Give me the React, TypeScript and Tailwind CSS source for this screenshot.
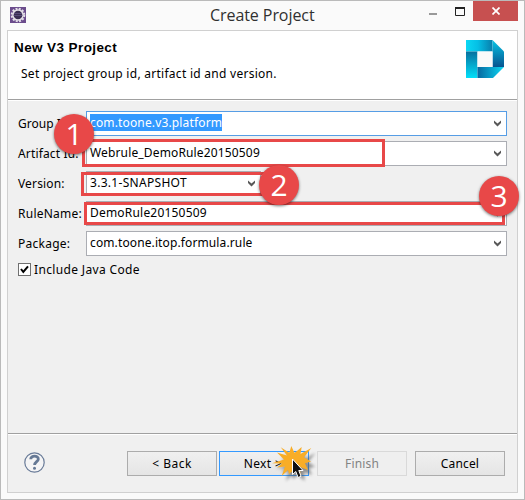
import React from "react";

function Chevron() {
  return (
    <svg className="mr-[5px] shrink-0" width="7" height="7" viewBox="0 0 7 7">
      <path d="M0 .5 L3.5 3.5 L7 .5 V3 L3.5 6.5 L0 3 Z" fill="#585858" />
    </svg>
  );
}

function Combo({ value, width = "w-[421px]", border = "border-[#abadb3]", tracking = "tracking-[.15px]", children }: {
  value: React.ReactNode;
  width?: string;
  border?: string;
  tracking?: string;
  children?: React.ReactNode;
}) {
  return (
    <div className={`relative flex h-[25px] items-center justify-between border bg-white pl-[3px] ${width} ${border}`}>
      <span className={`relative -top-px whitespace-nowrap leading-[17px] ${tracking}`}>{value}</span>
      <Chevron />
      {children}
    </div>
  );
}

function Row({ label, labelClass = "", children }: { label: string; labelClass?: string; children: React.ReactNode }) {
  return (
    <div className="flex h-[25px] items-center">
      <span className={`w-[68px] shrink-0 whitespace-nowrap ${labelClass}`}>{label}</span>
      {children}
    </div>
  );
}

function Badge({ n, place }: { n: number; place: string }) {
  return (
    <div className={`absolute z-20 flex size-10 items-center justify-center rounded-full bg-[#e84848] font-['Open_Sans',sans-serif] text-[30px] leading-none text-white shadow-[0_1px_3px_rgba(0,0,0,0.55)] ${place}`}>
      {n}
    </div>
  );
}

function Button({ children, tone = "border-[#acacac] text-black bg-linear-to-b from-[#f0f0f0] to-[#e5e5e5]", tracking = "tracking-[.15px]" }: {
  children: React.ReactNode;
  tone?: string;
  tracking?: string;
}) {
  return (
    <button className={`relative h-[25px] w-[90px] whitespace-nowrap border text-center leading-[23px] ${tone} ${tracking}`}>
      {children}
    </button>
  );
}

function EclipseIcon() {
  return (
    <svg width="16" height="16" viewBox="0 0 16 16">
      <rect width="16" height="16" fill="#6b4c8c" />
      <circle cx="8" cy="8" r="6.3" fill="none" stroke="#e4dfea" strokeWidth="2" strokeDasharray="2 1.3" />
      <circle cx="8" cy="8" r="5.1" fill="#3a2d52" stroke="#e4e0e6" strokeWidth="1.5" />
      <path d="M4 6.5h8M3.5 8.5h9" stroke="#67598a" strokeWidth=".7" />
    </svg>
  );
}

function Logo() {
  return (
    <svg width="38" height="38" viewBox="0 0 38 38">
      <defs>
        <linearGradient id="top" x2="1"><stop stopColor="#0bd8f4" /><stop offset=".45" stopColor="#05bfe5" /><stop offset="1" stopColor="#087eac" /></linearGradient>
        <linearGradient id="right" x2="0" y2="1"><stop stopColor="#06c5e6" /><stop offset="1" stopColor="#07538f" /></linearGradient>
        <linearGradient id="left" x2="0" y2="1"><stop stopColor="#06709e" /><stop offset="1" stopColor="#02e0fa" /></linearGradient>
        <linearGradient id="bottom" x2="1"><stop stopColor="#0768a0" /><stop offset="1" stopColor="#0bd8f4" /></linearGradient>
      </defs>
      <path d="M0 0H26.5V11.5H0Z" fill="url(#top)" />
      <path d="M0 11.5H11.5V38H0Z" fill="url(#left)" />
      <path d="M11.5 27H38L27 38H11.5Z" fill="url(#bottom)" />
      <path d="M26.5 0L38 11.5V27H26.5Z" fill="url(#right)" />
      <path d="M11.5 11.5H26.5V27H11.5Z" fill="#fafafa" />
    </svg>
  );
}

function ClickBurst() {
  const burst = "M0 18.3L12 14.5L5 7.5L15 10.5L8.7 2.3L17.3 7.7L19.3 1L22.5 8L29.7 2L28.5 9L39.3 3L32 12.3L39 16.5L33 18.3L36 25L28 22L28.5 31L22 25L17 29L16 25L9.7 31L13 21.5L5 22.5L10 18.5Z";
  return (
    <svg className="absolute left-[52px] top-[-7px] z-10" width="48" height="42" viewBox="0 0 48 42">
      <defs>
        <filter id="soft" x="-30%" y="-30%" width="170%" height="170%"><feGaussianBlur stdDeviation="1.7" /></filter>
      </defs>
      <path d={burst} transform="translate(4 5)" fill="#555" opacity=".6" filter="url(#soft)" />
      <path d={burst} fill="#f8ad27" />
      <path d="M20.5 14V29.5L23.8 26.5L26.1 32.5L29 31.2L26.8 25.5H31Z" fill="#111" stroke="#fff" strokeWidth="1" />
    </svg>
  );
}

export default function App() {
  return (
    <div className="flex h-[500px] w-[525px] flex-col border border-[#bababa] bg-[#fafafa] px-[6px] pb-[6px] font-['Noto_Sans','Open_Sans',sans-serif] text-[12px] text-black">
      <header className="relative flex h-[29px] shrink-0 items-start">
        <div className="ml-[3px] mt-[6px]"><EclipseIcon /></div>
        <h1 className="ml-[184px] mt-[4px] w-[105px] whitespace-nowrap font-['Open_Sans',sans-serif] text-[16px] leading-5 tracking-[-.07px] text-[#303030]">Create Project</h1>
        <svg className="ml-[114px] mt-[6px]" width="37" height="9" viewBox="0 0 37 9">
          <path d="M0 7H8" stroke="#999" strokeWidth="2" />
          <path d="M26.5 1.5H35.5V8.5H26.5Z" fill="none" stroke="#222" />
          <path d="M26 1H36" stroke="#222" strokeWidth="2" />
        </svg>
        <div className="absolute right-0 top-0 flex h-5 w-[45px] items-center justify-center bg-[#c75050]">
          <svg width="8" height="8" viewBox="0 0 8 8"><path d="M.5 .5L7.5 7.5M7.5 .5L.5 7.5" stroke="white" strokeWidth="1.7" /></svg>
        </div>
      </header>
      <main className="flex min-h-0 flex-1 flex-col border border-[#d0d0d0] bg-[#f0f0f0]">
        <section className="flex h-[69px] shrink-0 justify-between border-b border-[#a0a0a0] bg-white">
          <div>
            <h2 className="ml-[6px] mt-[9px] whitespace-nowrap font-['Liberation_Sans',Arial,sans-serif] text-[13.5px] font-bold leading-4 tracking-[.4px]">New V3 Project</h2>
            <p className="ml-[13px] mt-[9px] whitespace-nowrap text-[12px] leading-[18px] tracking-[.27px]">Set project group id, artifact id and version.</p>
          </div>
          <div className="mr-[13px] mt-[9px]"><Logo /></div>
        </section>
        <section className="flex h-[333px] shrink-0 flex-col gap-[5px] border-t border-white pl-[10px] pt-[10px]">
          <Row label="Group Id:">
            <Combo border="border-[#569de5]" value={<span className="inline-block bg-[#3399ff] text-white">com.toone.v3.platform</span>}>
              <Badge n={1} place="left-[-33px] top-[2px]" />
            </Combo>
          </Row>
          <Row label="Artifact Id:" labelClass="tracking-[.15px]">
            <Combo value="Webrule_DemoRule20150509">
              <div className="absolute left-[-5px] top-[-3px] h-7 w-[303px] border-3 border-[#e84848]" />
            </Combo>
          </Row>
          <Row label="Version:" labelClass="tracking-[.15px]">
            <Combo width="w-[175px]" value="3.3.1-SNAPSHOT" tracking="tracking-[.3px]">
              <div className="absolute left-[-6px] top-0 h-6 w-[184px] border-3 border-[#e84848]" />
              <Badge n={2} place="left-[172px] top-[-7px]" />
            </Combo>
          </Row>
          <Row label="RuleName:" labelClass="tracking-[.25px]">
            <Combo value="DemoRule20150509" tracking="tracking-[.2px]">
              <div className="absolute left-[-3px] top-0 h-[23px] w-[421px] border-3 border-[#e84848]" />
              <Badge n={3} place="left-[392px] top-[-26px]" />
            </Combo>
          </Row>
          <Row label="Package:" labelClass="tracking-[.25px]">
            <Combo value="com.toone.itop.formula.rule" tracking="tracking-[.12px]" />
          </Row>
          <div className="flex h-[17px] items-center gap-[3px]">
            <svg width="13" height="13" viewBox="0 0 13 13">
              <rect x=".5" y=".5" width="12" height="12" fill="white" stroke="#707070" />
              <path d="M3 6L5.3 9L10 3.3" fill="none" stroke="black" strokeWidth="2" />
            </svg>
            <span className="whitespace-nowrap tracking-[.35px]">Include Java Code</span>
          </div>
        </section>
        <footer className="flex min-h-0 flex-1 border-t border-[#a0a0a0]">
          <div className="flex flex-1 items-start border-t border-white">
            <svg className="ml-4 mt-[17px]" width="21" height="21" viewBox="0 0 21 21">
              <circle cx="10.5" cy="10.5" r="9.7" fill="#f4f4f5" stroke="#697b98" strokeWidth="1.2" />
              <path d="M6.7 7.2C6.7 3 14.5 3 14.3 7.2C14.2 9.5 10.7 10 10.6 13" fill="none" stroke="#667995" strokeWidth="2.8" />
              <circle cx="10.5" cy="16.2" r="1.5" fill="#667995" />
            </svg>
            <div className="ml-[82px] mt-4 flex">
              <Button tracking="tracking-[.5px]">&lt; Back</Button>
              <div className="ml-[2px] flex">
                <Button tone="border-[#3399ff] text-black bg-linear-to-b from-[#f0f0f0] to-[#e5e5e5]" tracking="tracking-[.4px]">
                  <span className="relative left-[-1px]">Next &gt;</span>
                  <ClickBurst />
                </Button>
              </div>
              <div className="ml-2 flex gap-2">
                <Button tone="border-[#d9d9d9] text-[#838383] bg-[#efefef]">Finish</Button>
                <Button>Cancel</Button>
              </div>
            </div>
          </div>
        </footer>
      </main>
    </div>
  );
}
